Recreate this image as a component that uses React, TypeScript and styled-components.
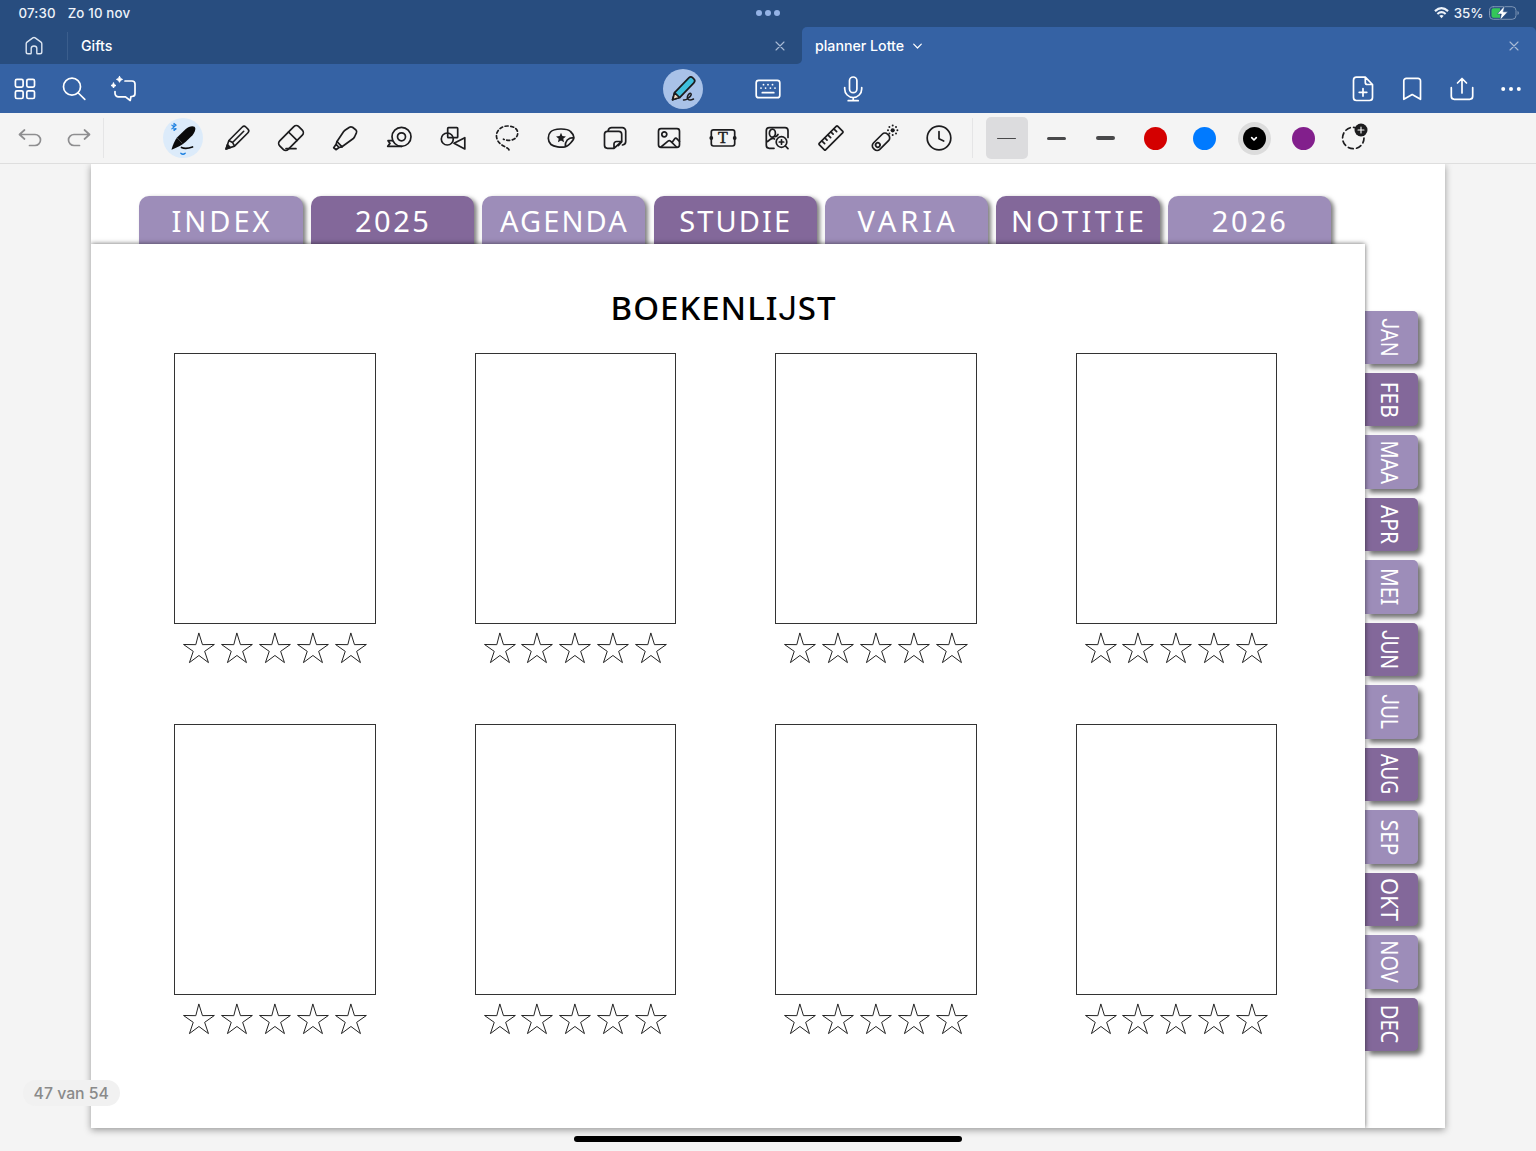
import React from 'react';
import styled, { createGlobalStyle, css } from 'styled-components';

const UI = `Inter, "Liberation Sans", sans-serif`;
const HAND = `"Noto Sans", "Open Sans", sans-serif`;

const GlobalStyle = createGlobalStyle`
  * { box-sizing: border-box; }
  body { margin: 0; background: #f4f4f4; font-family: ${UI}; overflow: hidden; }
`;

const Screen = styled.div`
  display: flex;
  flex-direction: column;
  width: 1536px;
  height: 1151px;
  overflow: hidden;
  background: #f4f4f4;
`;

/* ---------- status bar ---------- */
const StatusBar = styled.header`
  display: grid;
  grid-template-columns: 1fr auto 1fr;
  align-items: center;
  height: 27px;
  padding: 0 16.5px 1px;
  background: #284d7f;
  color: #eef3fa;
  font-size: 13.3px;
  font-weight: 500;
`;
const StatusLeft = styled.div`
  display: flex;
  gap: 12px;
  margin-left: 2px;
  letter-spacing: 0.15px;
`;
const StatusRight = styled.div`
  display: flex;
  justify-content: flex-end;
  align-items: center;
  gap: 5px;
  padding-right: 1px;
`;
const Dots = styled.div`
  display: flex;
  gap: 3px;
  i { width: 6px; height: 6px; border-radius: 50%; background: #94b3e6; }
`;

/* ---------- document tabs ---------- */
const TabStrip = styled.nav`
  display: flex;
  height: 37px;
  background: #3562a4;
`;
const TabBase = styled.div`
  display: flex;
  align-items: center;
  color: #fff;
  font-size: 14.2px;
  font-weight: 500;
`;
const IdleTab = styled(TabBase)`
  width: 802px;
  padding-right: 15.5px;
  background: #284d7f;
  border-bottom-right-radius: 5px;
`;
const ActiveCorner = styled.div`
  flex: 1;
  display: flex;
  background: #284d7f;
`;
const ActiveTab = styled(TabBase)`
  flex: 1;
  padding: 0 15.5px 0 13px;
  gap: 8px;
  background: #3562a4;
  border-radius: 5px 5px 0 0;
`;
const HomeCell = styled.div`
  display: flex;
  align-items: center;
  justify-content: center;
  width: 68px;
  height: 28px;
  border-right: 1px solid #3b5e8d;
`;
const TabTitle = styled.span<{ $indent?: number }>`
  margin-left: ${p => p.$indent ?? 0}px;
`;
const Spacer = styled.div`flex: 1;`;

/* ---------- blue toolbar ---------- */
const Toolbar = styled.div`
  display: grid;
  grid-template-columns: 1fr auto 1fr;
  height: 49px;
  background: #3562a4;
  color: #fff;
`;
const Group = styled.div<{ $end?: boolean }>`
  display: flex;
  align-items: center;
  justify-content: ${p => (p.$end ? 'flex-end' : 'flex-start')};
`;
const Cell = styled.div<{ $w: number }>`
  display: flex;
  flex: none;
  align-items: center;
  justify-content: center;
  width: ${p => p.$w}px;
`;
const Halo = styled.span<{ $bg: string }>`
  display: flex;
  width: 40px;
  height: 40px;
  border-radius: 50%;
  background: ${p => p.$bg};
`;

/* ---------- tool strip ---------- */
const ToolStrip = styled.div`
  display: flex;
  align-items: center;
  height: 51px;
  padding-left: 5px;
  border-bottom: 1px solid #dedede;
  background: #f4f4f4;
  color: #1c1c1e;
`;
const HistoryGroup = styled(Group)`
  width: 99px;
  height: 40px;
  color: #8e8e90;
  border-right: 1px solid #e5e5e6;
`;
const Tools = styled(Group)`
  margin-left: 52px;
  width: 817px;
  height: 40px;
  border-right: 1px solid #e5e5e6;
`;
const Styles = styled(Group)`margin-left: 9px;`;
const WidthButton = styled.span<{ $active?: boolean }>`
  display: flex;
  align-items: center;
  justify-content: center;
  width: 42px;
  height: 42px;
  border-radius: 5px;
  background: ${p => (p.$active ? '#dcdcde' : 'transparent')};
`;
const Line = styled.i<{ $h: number }>`
  width: 19px;
  height: ${p => p.$h}px;
  border-radius: 2px;
  background: #48484a;
`;
const Swatch = styled.span<{ $c: string; $active?: boolean }>`
  display: flex;
  align-items: center;
  justify-content: center;
  width: 23px;
  height: 23px;
  border-radius: 50%;
  background: ${p => p.$c};
  ${p => p.$active && css`box-shadow: 0 0 0 5px #dcdcdc;`}
`;

const Svg = styled.svg`
  display: block;
  flex: none;
  overflow: visible;
  fill: none;
  stroke: currentColor;
  stroke-linecap: round;
  stroke-linejoin: round;
`;
const Icon = ({ children, sw = 1.7, size = 40 }: { children: React.ReactNode; sw?: number; size?: number }) => (
  <Svg width={size} height={size} viewBox={`${-size / 2} ${-size / 2} ${size} ${size}`} strokeWidth={sw}>{children}</Svg>
);
const solid = { fill: 'currentColor', stroke: 'none' };

/* ---------- planner page ---------- */
const Workspace = styled.main`
  position: relative;
  flex: 1;
  padding: 0 91px;
  overflow: hidden;
`;
const Planner = styled.article`
  display: flex;
  flex-direction: column;
  width: 1354px;
  height: 964px;
  background: #fff;
  box-shadow: 0 2px 7px rgba(0, 0, 0, 0.38);
`;
const TopTabs = styled.div`
  display: flex;
  gap: 8.1px;
  height: 80px;
  padding: 32px 0 0 48.4px;
`;
const TopTab = styled.div<{ $dark: boolean; $ls: number }>`
  display: flex;
  align-items: center;
  justify-content: center;
  width: 163.3px;
  height: 54px;
  padding: 0 1px 6px ${p => p.$ls}px;
  border-radius: 10px 10px 0 0;
  background: ${p => (p.$dark ? '#83689a' : '#9d8db9')};
  box-shadow: 3px 2px 4px rgba(0, 0, 0, 0.5);
  color: #fff;
  font: 400 29px/1 ${HAND};
  letter-spacing: ${p => p.$ls}px;
`;
const Body = styled.div`
  display: flex;
  height: 884px;
`;
const Sheet = styled.section`
  position: relative;
  z-index: 1;
  width: 1274px;
  padding-top: 44px;
  background: #fff;
  box-shadow: 0 0 5px rgba(0, 0, 0, 0.6);
  clip-path: inset(-8px -8px 0 0);
`;
const Title = styled.h1`
  margin: 0 0 25px;
  padding-right: 9px;
  height: 40px;
  text-align: center;
  color: #000;
  font: 500 33px/39px ${HAND};
  letter-spacing: 1px;
`;
const ShortJ = styled.span`
  font-family: Roboto, sans-serif;
  font-weight: 400;
`;
const Books = styled.div`
  display: grid;
  grid-template-columns: repeat(4, 201.5px);
  column-gap: 99px;
  row-gap: 60px;
  padding-left: 83px;
`;
const Book = styled.div`
  display: flex;
  flex-direction: column;
  align-items: center;
  height: 311px;
`;
const Cover = styled.div`
  flex: none;
  width: 201.5px;
  height: 271px;
  border: 1px solid #333;
`;
const Stars = styled.div`
  display: flex;
  flex: none;
  margin-top: 8px;
`;
const MonthTabs = styled.div`
  display: flex;
  flex-direction: column;
  gap: 9.2px;
  padding-top: 66.5px;
`;
const MonthTab = styled.div<{ $dark: boolean }>`
  display: flex;
  align-items: center;
  justify-content: center;
  width: 53.3px;
  height: 53.3px;
  padding-right: 3px;
  border-radius: 0 5px 5px 0;
  background: ${p => (p.$dark ? '#83689a' : '#9d8db9')};
  box-shadow: 4px 4px 5px rgba(0, 0, 0, 0.55);
  color: #fff;
`;
const MonthName = styled.span<{ $s: number }>`
  writing-mode: vertical-rl;
  transform: scaleY(${p => p.$s});
  font: 400 24px/1 ${HAND};
`;
const PageBadge = styled.div`
  position: absolute;
  z-index: 2;
  left: 23px;
  top: 916px;
  width: 96.5px;
  height: 26px;
  border-radius: 13px;
  background: #f1f1f1;
  color: #8a8a8a;
  text-align: center;
  font-size: 15.8px;
  font-weight: 500;
  line-height: 27px;
`;
const HomeIndicator = styled.div`
  position: absolute;
  z-index: 2;
  left: 574px;
  top: 972px;
  width: 388px;
  height: 6px;
  border-radius: 3px;
  background: #000;
`;

const CloseIcon = () => (
  <Icon size={14} sw={1.1}><path d="M-4-4 4 4M4-4-4 4" stroke="#a9bbd6" /></Icon>
);

const HandText = ({ text }: { text: string }) => (
  <span>{text.split(/(J)/).filter(Boolean).map((s, i) => (s === 'J' ? <ShortJ key={i}>J</ShortJ> : s))}</span>
);

const burst = Array.from({ length: 8 }, (_, i) => {
  const a = (i * Math.PI) / 4;
  return [7.7 + 4.7 * Math.cos(a), -7.7 + 4.7 * Math.sin(a)];
});

const starPath = (r: number, q: number) =>
  'M' + Array.from({ length: 10 }, (_, i) => {
    const a = -Math.PI / 2 + (i * Math.PI) / 5;
    const d = i % 2 ? q : r;
    return `${(d * Math.cos(a)).toFixed(2)} ${(d * Math.sin(a)).toFixed(2)}`;
  }).join('L') + 'Z';

const tools: React.ReactNode[] = [
  <>
    <path d="M-11.5 11.7C-10.2 7-8.5 2.500-5.500-1L2.500-8.800C5.500-11.500 9.500-12.700 11.500-11.200C13.300-9.700 12-6 9.500-2.800L2.500 4C-1 7-6 9.500-11.500 11.700Z" fill="#0a0a0a" stroke="none" />
    <path d="M-5.800 0-1 5" stroke="#666" strokeWidth={0.7} />
    <path d="M-1.500 9.500c3 1.300 7 .9 11-.5" stroke="#0a0a0a" />
    <path d="M-11.200-12.900-6.800-9.200-9-7.500V-14.600L-6.800-12.900-11.200-9.200" stroke="#1b7fe0" strokeWidth={1.1} />
    <path d="M-2.200 15.200Q0 17.200 2.200 15.200" stroke="#1b7fe0" strokeWidth={1.3} />
  </>,
  <g transform="rotate(-45)">
    <path d="M-15.500 0-7.500-4H11.500a2.500 2.500 0 0 1 2.500 2.500v3A2.500 2.500 0 0 1 11.500 4H-7.500ZM-7.500-4-6.300 0-7.500 4M-6.300 0H9.500" strokeWidth={1.6} />
    <path d="M-15.500 0-11.500-2V2Z" fill="currentColor" />
  </g>,
  <>
    <g transform="rotate(-45)"><rect x={-13.5} y={-6} width={27} height={12} rx={3.5} /><path d="M2.500-6V6" /></g>
    <path d="M-5 10.700H5" />
  </>,
  <>
    <path d="M-8 3.500-1.500-6.200Q-.8-7.200.3-8L4.500-10.800q1.500-.9 3 .1L10.700-8.300q1.500 1.300.7 3.200L9.500-1Q9 0 8 .8L-3 8.800-8 3.500Z" />
    <path d="M-8 3.500-8.900 6.300-11.300 9.800-8.800 11.700-6 9.500-3 8.800M-8.900 6.300-6 9.500" />
  </>,
  <>
    <circle cx={2.5} cy={-1.2} r={9.5} /><circle cx={2.5} cy={-1.2} r={4} />
    <path d="M2.500 8.300H-11.300l2.300-2.900L-11 2.700h4.500" />
  </>,
  <>
    <rect x={-5.3} y={-10.3} width={10} height={10} rx={0.8} />
    <circle cx={-5.7} cy={1} r={6} />
    <path d="M1 5.300 11.800-.3V11Z" />
  </>,
  <path d="M2 11.800C.5 8.500-9.500 8-10.500-1.500C-11-8-5-12 .5-12C7-12 11-8.800 10.700-4.500C10.300 1.500 3 4-3.500 1.200" strokeDasharray="3 2.600" />,
  <>
    <path d="M4 8.800C0 9.500-7 9-10 6.500C-13.500 3.500-13.500-3-10.500-6C-7-9.800 6-10 9.500-6.500C11.500-4.700 12.700-2.500 12.900-.5C13 2 7 8.500 4 8.800ZM4.300 8.600C4 3 7-.5 12.800-.3" />
    <path d={starPath(5.2, 2.4)} {...solid} />
  </>,
  <>
    <path d="M-1 10.300H-7.500a3 3 0 0 1-3-3V-3.700a3 3 0 0 1 3-3H3.700a3 3 0 0 1 3 3V3.500ZM-1 10.300V6a2.500 2.500 0 0 1 2.500-2.500H6.700" />
    <path d="M-6.800-7.500q.5-2.900 3.500-2.900H7.200a3.500 3.500 0 0 1 3.500 3.500V3.500q0 3-3.200 3.500M6.500 4 3.500 7.500" />
  </>,
  <>
    <rect x={-10.5} y={-9.3} width={21} height={18.6} rx={2.5} />
    <circle cx={-4.7} cy={-3.7} r={2.5} />
    <path d="M-8 9-1 3.200Q.3 2.200 1.500 3.200L7.500 9M3 4.500 5.500 1Q6.800-.5 8 .8L10.500 3.500" />
  </>,
  <>
    <rect x={-11.7} y={-8.2} width={23.4} height={16.2} rx={2.2} />
    <circle cx={-11.7} cy={0} r={1.9} {...solid} /><circle cx={11.7} cy={0} r={1.9} {...solid} />
    <text x={0} y={5.2} textAnchor="middle" fontFamily="Liberation Serif, serif" fontSize={16} fontWeight={400} fill="currentColor" strokeWidth={0.5}>T</text>
  </>,
  <>
    <path d="M-3 10.300H-7.700a3 3 0 0 1-3-3V-7.300a3 3 0 0 1 3-3H8a3 3 0 0 1 3 3V-.5" />
    <ellipse cx={-4.6} cy={-4.8} rx={3} ry={4} />
    <path d="M-9.500 3.500Q-4.500-1-2.500 1M-2.500-1.500Q-.5-1 1-3.500" />
    <circle cx={4.5} cy={4} r={5.3} /><path d="M8.400 8 11 10.700M4.500 1.800v4.400M2.300 4h4.400" />
  </>,
  <g transform="rotate(-45)">
    <rect x={-13} y={-4.5} width={26} height={9} rx={0.8} />
    <path d="M-8.500-4.500V-.5M-4.300-4.500V-1.300M0-4.500V-.5M4.300-4.500V-1.300M8.500-4.500V-.5" />
  </g>,
  <>
    <g transform="translate(-4 3.800) rotate(-45)">
      <rect x={-10} y={-4.5} width={20} height={9} rx={3.8} /><circle cx={-4.5} cy={0} r={2.2} />
    </g>
    <circle cx={7.7} cy={-7.7} r={2.1} {...solid} />
    {burst.map(([x, y], i) => <circle key={i} cx={x} cy={y} r={1} {...solid} />)}
  </>,
  <><circle r={11.8} /><path d="M0-6.500V.8L4.700 3" /></>,
];

const leftActions = [
  <>{[-9.6, 1.8].map(x => [-9.6, 1.8].map(y => <rect key={`${x}${y}`} x={x} y={y} width={7.7} height={7.7} rx={1.5} />))}</>,
  <><circle cx={-2} cy={-2.3} r={8.5} /><path d="M4.300 4 10.800 10.300" /></>,
  <g transform="translate(-.5 0)">
    <path d="M1.500-8H8.500A3 3 0 0 1 11.500-5V4.500A3 3 0 0 1 8.500 7.500H7.500L6.700 11.500 2 7.800H-5A3.500 3.500 0 0 1-8.500 4.300V2.500" />
    <path d="M-4-12.500Q-3.500-10-1-9.600-3.500-9.200-4-6.700-4.500-9.200-7-9.600-4.500-10-4-12.500ZM-10-6Q-9.600-3.900-7.500-3.500-9.600-3.100-10-1-10.400-3.100-12.500-3.500-10.400-3.900-10-6Z" fill="currentColor" strokeWidth={1} />
  </g>,
];
const rightActions = [
  <path d="M2.300-11.800H-6.500a3 3 0 0 0-3 3V8.500a3 3 0 0 0 3 3H6.500a3 3 0 0 0 3-3V-4.500ZM2.300-11.800V-6.500a2 2 0 0 0 2 2H9.500M0-.5v7.600M-3.800 3.300h7.600" />,
  <path d="M-8.200 10.300V-8.200a2.500 2.500 0 0 1 2.500-2.500H6a2.500 2.500 0 0 1 2.500 2.500V10.300L.2 5.500Z" />,
  <path d="M0 4V-10.500M-4.500-6 0-10.500 4.500-6M-10.700-1.300V7.300a3 3 0 0 0 3 3H7.700a3 3 0 0 0 3-3V-1.300" />,
  <>{[-7.8, 0, 7.8].map(x => <circle key={x} cx={x} r={2} {...solid} />)}</>,
];

const topTabs: [string, number][] = [
  ['INDEX', 3], ['2025', 2.5], ['AGENDA', 2.1], ['STUDIE', 2.1], ['VARIA', 4], ['NOTITIE', 3.5], ['2026', 2.6],
];
const months: [string, number][] = [
  ['JAN', 0.82], ['FEB', 0.87], ['MAA', 0.83], ['APR', 0.87], ['MEI', 0.86], ['JUN', 0.8],
  ['JUL', 0.8], ['AUG', 0.8], ['SEP', 0.87], ['OKT', 0.91], ['NOV', 0.83], ['DEC', 0.84],
];

export default function App() {
  return (
    <Screen>
      <GlobalStyle />
      <StatusBar>
        <StatusLeft><span>07:30</span><span>Zo 10 nov</span></StatusLeft>
        <Dots><i /><i /><i /></Dots>
        <StatusRight>
          <Svg width={15} height={11.5} viewBox="0 0 16 12" strokeWidth={2.3} style={{ strokeLinecap: 'butt' }}>
            <path d="M1 4.300Q8-2 15 4.300M3.600 7.300Q8 3.500 12.400 7.300" />
            <path d="M8 11.800 5.700 9.300Q8 7.500 10.300 9.300Z" {...solid} />
          </Svg>
          <span>35%</span>
          <Svg width={30} height={14} viewBox="0 0 30 14" strokeWidth={1}>
            <rect x={0.5} y={0.7} width={26.5} height={12.6} rx={3.8} stroke="#7d95b5" />
            <path d="M28.500 5v4q1.400-.6 1.400-2t-1.400-2Z" fill="#7d95b5" stroke="none" />
            <path d="M4.500 2.200H11V11.800H4.500a2 2 0 0 1-2-2v-5.600a2 2 0 0 1 2-2Z" fill="#34c759" stroke="none" />
            <path d="M15.600-.3 8.300 8H12.300L11 14.300 18.800 5.800H14.500Z" fill="#fff" stroke="#284d7f" strokeWidth={0.6} />
          </Svg>
        </StatusRight>
      </StatusBar>

      <TabStrip>
        <IdleTab>
          <HomeCell>
            <Icon size={20} sw={1.4}>
              <path d="M-7.800-2.200Q-7.800-3.200-7-3.900L-1.200-8.100Q0-8.900 1.200-8.100L7-3.900Q7.800-3.200 7.800-2.200V6Q7.800 7.800 6 7.800H3.500Q2.800 7.800 2.800 7V2.200Q2.800 0 0 0T-2.800 2.200V7Q-2.800 7.800-3.500 7.800H-6Q-7.800 7.800-7.800 6Z" stroke="#dde6f2" />
            </Icon>
          </HomeCell>
          <TabTitle $indent={13}>Gifts</TabTitle>
          <Spacer />
          <CloseIcon />
        </IdleTab>
        <ActiveCorner>
          <ActiveTab>
            <TabTitle>planner Lotte</TabTitle>
            <Icon size={12} sw={1.2}><path d="M-4.300-1.800-.5 2 3.300-1.800" /></Icon>
            <Spacer />
            <CloseIcon />
          </ActiveTab>
        </ActiveCorner>
      </TabStrip>

      <Toolbar>
        <Group>{leftActions.map((a, i) => <Cell key={i} $w={49.5}><Icon>{a}</Icon></Cell>)}</Group>
        <Group>
          <Cell $w={85}>
            <Halo $bg="#a9c2e8">
              <Icon>
                <g transform="rotate(-46)" stroke="#1c1c1e">
                  <path d="M-15 0-8.500-3.500H12a2.800 2.800 0 0 1 2.800 2.800V.7a2.800 2.800 0 0 1-2.800 2.800H-8.500Z" fill="#3fbfdc" />
                  <path d="M-15 0-8.500-3.500V3.500Z" fill="#f2dcc0" />
                </g>
                <path d="M.5 11C3 11.500 9.500 6.500 8 4.700S3 8 5 10.200Q6.800 12 10.500 10" stroke="#1c1c1e" strokeWidth={1.5} />
              </Icon>
            </Halo>
          </Cell>
          <Cell $w={85}>
            <Icon>
              <rect x={-11.8} y={-8.7} width={23.6} height={17.4} rx={2.5} />
              <path d="M-5.700 3.700H5.800" />
              {[-4.5, 0, 4.5].map(x => <circle key={x} cx={x} cy={-4.3} r={0.9} {...solid} />)}
              {[-7, -2.4, 2.4, 7].map(x => <circle key={x} cx={x} cy={-0.9} r={0.9} {...solid} />)}
            </Icon>
          </Cell>
          <Cell $w={85}>
            <Icon>
              <rect x={-3.5} y={-12} width={7.4} height={15.7} rx={3.7} />
              <path d="M-8.300-1.500V0A8.500 8.500 0 0 0 8.700 0V-1.500M.2 8.500V11.500M-4.800 11.700H5.200" />
            </Icon>
          </Cell>
        </Group>
        <Group $end>{rightActions.map((a, i) => <Cell key={i} $w={49.5}><Icon>{a}</Icon></Cell>)}</Group>
      </Toolbar>

      <ToolStrip>
        <HistoryGroup>
          <Cell $w={49}><Icon><path d="M-5.500-8-10.500-3.500-5.500 1M-10.500-3.500H5A5.500 5.500 0 0 1 5 7.500H-.5" /></Icon></Cell>
          <Cell $w={49}><Icon><path d="M5.500-8 10.500-3.500 5.500 1M10.500-3.500H-5A5.500 5.500 0 0 0-5 7.500H.5" /></Icon></Cell>
        </HistoryGroup>
        <Tools>
          {tools.map((t, i) => (
            <Cell key={i} $w={54}><Halo $bg={i === 0 ? '#dcebfa' : 'transparent'}><Icon>{t}</Icon></Halo></Cell>
          ))}
        </Tools>
        <Styles>
          <Cell $w={49.5}><WidthButton $active><Line $h={1} /></WidthButton></Cell>
          <Cell $w={49.5}><WidthButton><Line $h={3} /></WidthButton></Cell>
          <Cell $w={49.5}><WidthButton><Line $h={4.5} /></WidthButton></Cell>
          <Cell $w={49.5}><Swatch $c="#d40000" /></Cell>
          <Cell $w={49.5}><Swatch $c="#007aff" /></Cell>
          <Cell $w={49.5}>
            <Swatch $c="#000" $active><Icon size={10}><path d="M-2.300-.3 0 2 2.300-.3" stroke="#fff" /></Icon></Swatch>
          </Cell>
          <Cell $w={49.5}><Swatch $c="#821f8c" /></Cell>
          <Cell $w={49.5}>
            <Icon>
              <circle cx={0.3} cy={0} r={10.7} strokeDasharray="5 3.400" />
              <circle cx={8} cy={-8} r={6.5} {...solid} />
              <path d="M8-11v6M5-8h6" stroke="#fff" strokeWidth={1.1} />
            </Icon>
          </Cell>
        </Styles>
      </ToolStrip>

      <Workspace>
        <Planner>
          <TopTabs>
            {topTabs.map(([t, ls], i) => <TopTab key={t} $dark={i % 2 === 1} $ls={ls}>{t}</TopTab>)}
          </TopTabs>
          <Body>
            <Sheet>
              <Title><HandText text="BOEKENLIJST" /></Title>
              <Books>
                {Array.from({ length: 8 }, (_, b) => (
                  <Book key={b}>
                    <Cover />
                    <Stars>
                      {Array.from({ length: 5 }, (_, s) => (
                        <Svg key={s} width={37.9} height={34} viewBox="-18.95 -17.5 37.9 34" strokeWidth={1} style={{ strokeLinejoin: 'miter' }}>
                          <path d={starPath(16.2, 6)} stroke="#222" />
                        </Svg>
                      ))}
                    </Stars>
                  </Book>
                ))}
              </Books>
            </Sheet>
            <MonthTabs>
              {months.map(([m, s], i) => (
                <MonthTab key={m} $dark={i % 2 === 1}><MonthName $s={s}><HandText text={m} /></MonthName></MonthTab>
              ))}
            </MonthTabs>
          </Body>
        </Planner>
        <PageBadge>47 van 54</PageBadge>
        <HomeIndicator />
      </Workspace>
    </Screen>
  );
}
